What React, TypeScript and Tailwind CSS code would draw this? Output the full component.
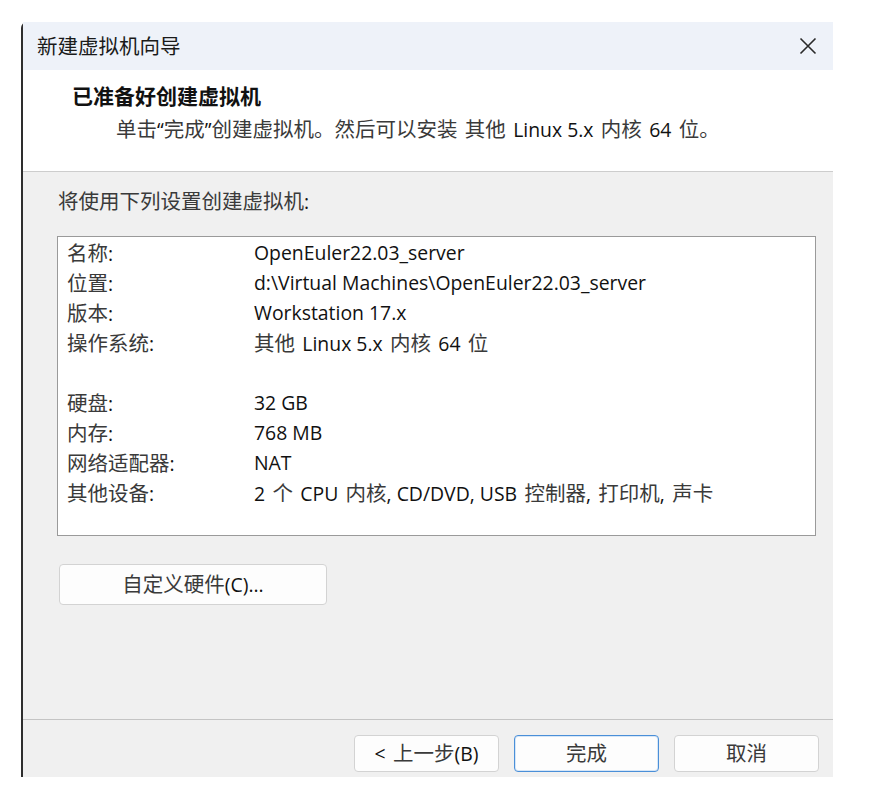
import React from 'react';

interface SummaryRow {
  label: string;
  value: string;
}

const generalRows: SummaryRow[] = [
  { label: '名称:', value: 'OpenEuler22.03_server' },
  { label: '位置:', value: 'd:\\Virtual Machines\\OpenEuler22.03_server' },
  { label: '版本:', value: 'Workstation 17.x' },
  { label: '操作系统:', value: '其他 Linux 5.x 内核 64 位' },
];

const hardwareRows: SummaryRow[] = [
  { label: '硬盘:', value: '32 GB' },
  { label: '内存:', value: '768 MB' },
  { label: '网络适配器:', value: 'NAT' },
  { label: '其他设备:', value: '2 个 CPU 内核, CD/DVD, USB 控制器, 打印机, 声卡' },
];

// Han runs (with the spaces around them) are set a bit larger, lighter and wider-spaced
const HAN = /( *[\u3000-\u303f\u4e00-\u9fff\uff00-\uffef]+ *)/;

const Mixed: React.FC<{ text: string }> = ({ text }) => (
  <span>
    {text.split(HAN).map((part, i) =>
      HAN.test(part) ? (
        <span key={i} className="text-[20.5px] text-[#3a3a3a] [word-spacing:2px]">
          {part}
        </span>
      ) : (
        <span key={i}>{part}</span>
      ),
    )}
  </span>
);

const Row: React.FC<{ row: SummaryRow }> = ({ row }) => (
  <div className="flex h-[30px] items-center">
    <span className="w-[187px] shrink-0">
      <Mixed text={row.label} />
    </span>
    <span className="whitespace-pre">
      <Mixed text={row.value} />
    </span>
  </div>
);

const DialogButton: React.FC<{ text: string; primary?: boolean }> = ({ text, primary }) => (
  <button
    className={`flex h-[37px] w-[145px] items-center justify-center whitespace-pre rounded-[4px] border bg-[#fdfdfd] text-[19.4px] text-[#111] ${
      primary ? 'border-[#4a8fd8] shadow-[inset_0_0_0_1px_#d6e6f7]' : 'border-[#d3d3d3]'
    }`}
  >
    <Mixed text={text} />
  </button>
);

export default function App() {
  return (
    <div
      className="min-h-[790px] bg-white pl-[21px] pt-[22px]"
      style={{ fontFamily: '"Segoe UI", "Open Sans", "Noto Sans CJK SC", sans-serif' }}
    >
      <div className="flex h-[755px] w-[812px] flex-col rounded-tl-[6px] border-l-[2px] border-[#2e2e2e] text-[19.4px] text-[#111]">
        {/* title bar */}
        <div className="flex h-[48px] shrink-0 items-center justify-between bg-[#eef2f9] pl-[14px] pr-[16px]">
          <span className="text-[20.5px] text-[#1a1a1a]">新建虚拟机向导</span>
          <svg width="18" height="18" viewBox="0 0 18 18" className="text-[#2a2a2a]">
            <path d="M1.5 1.5 L16.5 16.5 M16.5 1.5 L1.5 16.5" stroke="currentColor" strokeWidth="1.6" fill="none" />
          </svg>
        </div>

        {/* header */}
        <div className="h-[102px] shrink-0 border-b border-[#cdcdcd] bg-white pl-[49px] pt-[11px]">
          <div className="h-[30px] text-[21px] font-bold leading-[30px] text-[#111]">已准备好创建虚拟机</div>
          <div className="mt-[3px] h-[30px] whitespace-pre pl-[44px] leading-[30px]">
            <Mixed text="单击“完成”创建虚拟机。然后可以安装 其他 Linux 5.x 内核 64 位。" />
          </div>
        </div>

        {/* body */}
        <div className="flex flex-1 flex-col bg-[#f0f0f0] pl-[34px] pt-[14px]">
          <div className="h-[30px] pl-[1px] leading-[30px]">
            <Mixed text="将使用下列设置创建虚拟机:" />
          </div>
          <div className="mt-[20px] h-[300px] w-[759px] border border-[#9a9a9a] bg-white pl-[9px] pt-[1px]">
            {generalRows.map((r) => (
              <Row key={r.label} row={r} />
            ))}
            <div className="h-[30px]" />
            {hardwareRows.map((r) => (
              <Row key={r.label} row={r} />
            ))}
          </div>
          <button className="ml-[2px] mt-[28px] flex h-[41px] w-[268px] items-center justify-center rounded-[4px] border border-[#d3d3d3] bg-[#fdfdfd] text-[19.4px] text-[#111]">
            <Mixed text="自定义硬件(C)..." />
          </button>
        </div>

        {/* footer */}
        <div className="flex h-[58px] shrink-0 justify-end gap-[15px] border-t border-[#c4c4c4] bg-[#f0f0f0] pr-[14px] pt-[15px]">
          <DialogButton text="< 上一步(B)" />
          <DialogButton text="完成" primary />
          <DialogButton text="取消" />
        </div>
      </div>
    </div>
  );
}
